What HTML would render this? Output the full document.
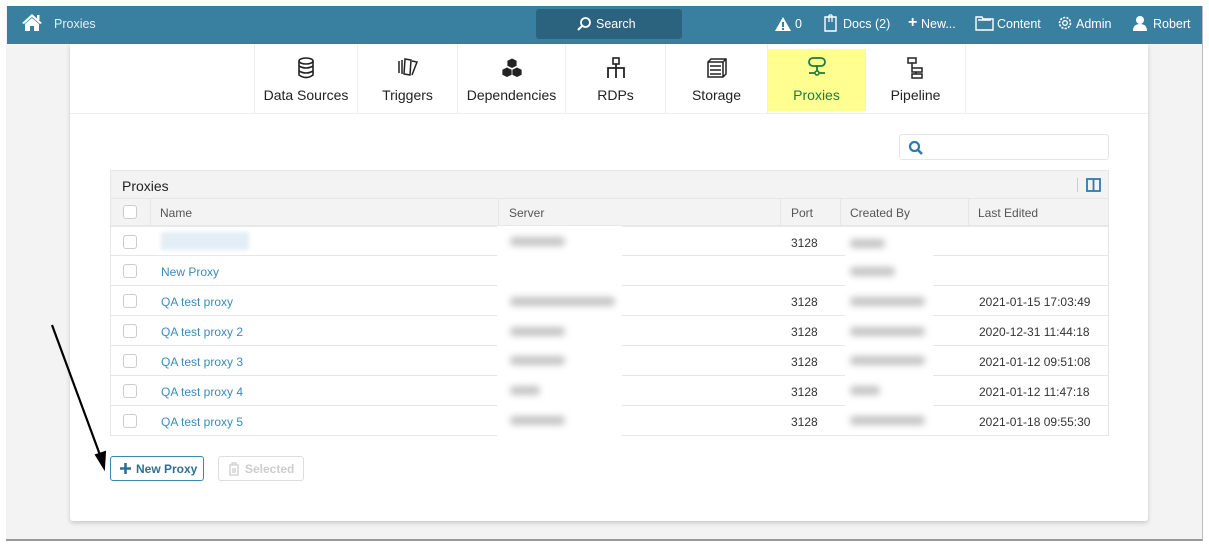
<!DOCTYPE html>
<html><head><meta charset="utf-8"><style>
*{box-sizing:border-box;margin:0;padding:0}
body{width:1209px;height:544px;background:#fff;font-family:"Liberation Sans",sans-serif;position:relative;overflow:hidden;font-size:12px;color:#333}
.frame{position:absolute;left:6px;top:6px;width:1197px;height:535px;background:#f3f3f3;border-right:1px solid #bbb;border-bottom:2px solid #999}
.top{position:absolute;left:7px;top:6px;width:1195px;height:38px;background:#387fa0;color:#fff;font-size:12.5px}
.top span{position:absolute;top:11px}
.search{position:absolute;left:529px;top:3px;width:146px;height:30px;background:#2b627e;border-radius:3px}
.card{position:absolute;left:70px;top:44px;width:1078px;height:477px;background:#fff;box-shadow:0 2px 5px rgba(0,0,0,.18);border-radius:0 0 3px 3px}
.tab{position:absolute;top:44px;height:69px;border-right:1px solid #eee;text-align:center;font-size:14px;color:#222}
.tab .lbl{position:absolute;left:0;right:0;top:43px}
.tab svg{position:absolute;left:50%;top:13px;transform:translateX(-50%)}
.hline{position:absolute;left:70px;width:1078px;top:113px;height:1px;background:#eee}
.abs{position:absolute}
.row{position:absolute;left:110px;width:999px;height:30px;border-bottom:1px solid #e6e6e6;border-left:1px solid #e6e6e6;border-right:1px solid #e6e6e6}
.cb{position:absolute;left:12px;top:8px;width:14px;height:14px;border:1px solid #ccc;border-radius:3px;background:#fff}
.nm{position:absolute;left:50px;top:9px;color:#3a8bbb;font-size:12px}
.pt{position:absolute;left:680px;top:9px}
.le{position:absolute;left:868px;top:9px}
.blur{position:absolute;background:#c4c4c4;filter:blur(3.5px);height:9px;border-radius:4px}
</style></head><body>
<div class="frame"></div>
<div class="top">
 <svg class="abs" style="left:14px;top:7px" width="22" height="19" viewBox="0 0 22 19"><path d="M11 1 L1 10 L3 11 L11 4 L19 11 L21 10 Z" fill="#fff"/><path d="M4 11 L11 5 L18 11 V18 H13 V13 H9 V18 H4Z" fill="#fff"/><rect x="16" y="2" width="2.5" height="5" fill="#fff"/></svg>
 <span style="left:47px;color:#e6eef3">Proxies</span>
 <div class="search"><svg class="abs" style="left:40px;top:7px" width="16" height="16" viewBox="0 0 16 16"><circle cx="9.5" cy="6.5" r="4.5" fill="none" stroke="#fff" stroke-width="1.8"/><path d="M6.3 9.7 L2 14" stroke="#fff" stroke-width="2"/></svg><span style="left:60px;top:8px">Search</span></div>
 <svg class="abs" style="left:768px;top:11px" width="16" height="14" viewBox="0 0 16 14"><path d="M8 0 L16 14 H0Z" fill="#fff"/><rect x="7" y="5" width="2" height="5" fill="#387fa0"/><rect x="7" y="11" width="2" height="2" fill="#387fa0"/></svg>
 <span style="left:788px">0</span>
 <svg class="abs" style="left:817px;top:8px" width="13" height="18" viewBox="0 0 13 18"><path d="M1 3 H12 V17 H1Z" fill="none" stroke="#fff" stroke-width="1.4"/><path d="M5 1 V8 M8 1 V8 M5 1 H8" stroke="#fff" stroke-width="1.2" fill="none"/></svg>
 <span style="left:836px">Docs (2)</span>
 <span style="left:901px;font-weight:bold;font-size:16px;top:8px">+</span><span style="left:914px">New...</span>
 <svg class="abs" style="left:968px;top:10px" width="19" height="15" viewBox="0 0 19 15"><path d="M1 1 H7 L8 3 H18 V14 H1Z M3 4 H16" fill="none" stroke="#fff" stroke-width="1.4"/></svg>
 <span style="left:990px">Content</span>
 <svg class="abs" style="left:1050px;top:9px" width="16" height="16" viewBox="0 0 16 16"><circle cx="8" cy="8" r="5.5" fill="none" stroke="#fff" stroke-width="1.6" stroke-dasharray="2.2 1.2"/><circle cx="8" cy="8" r="2.3" fill="none" stroke="#fff" stroke-width="1.3"/></svg>
 <span style="left:1069px">Admin</span>
 <svg class="abs" style="left:1125px;top:9px" width="16" height="16" viewBox="0 0 16 16"><circle cx="8" cy="5" r="4" fill="#fff"/><path d="M1 16 Q1 9 8 9 Q15 9 15 16Z" fill="#fff"/></svg>
 <span style="left:1146px">Robert</span>
</div>
<div class="card"></div>
<div class="hline"></div>
<div class="tab" style="left:254px;width:104px;border-left:1px solid #eee"><svg width="18" height="22" viewBox="0 0 18 22"><ellipse cx="9" cy="4" rx="7" ry="3" fill="none" stroke="#222" stroke-width="1.6"/><path d="M2 4 V18 Q9 23 16 18 V4 M2 9 Q9 13 16 9 M2 14 Q9 18 16 14" fill="none" stroke="#222" stroke-width="1.6"/></svg><div class="lbl">Data Sources</div></div>
<div class="tab" style="left:358px;width:100px"><svg width="24" height="20" viewBox="0 0 24 20"><path d="M3 4 V16 M6 3 V17" stroke="#222" stroke-width="1.5"/><path d="M9 2 L15 3 L14 18 L8 17Z M16 4 L21 5 L16 18" fill="none" stroke="#222" stroke-width="1.5"/></svg><div class="lbl">Triggers</div></div>
<div class="tab" style="left:458px;width:108px"><svg width="24" height="22" viewBox="0 0 24 22"><path d="M12 1 L17 3.5 V9 L12 11.5 L7 9 V3.5Z M7 10 L12 12.5 V18 L7 20.5 L2 18 V12.5Z M17 10 L22 12.5 V18 L17 20.5 L12 18 V12.5Z" fill="#222" stroke="#fff" stroke-width=".8"/></svg><div class="lbl">Dependencies</div></div>
<div class="tab" style="left:566px;width:100px"><svg width="20" height="22" viewBox="0 0 20 22"><rect x="7" y="1" width="6" height="6" fill="none" stroke="#222" stroke-width="1.6"/><path d="M10 7 V11 M2 21 V11 H18 V21 M10 11 V21" fill="none" stroke="#222" stroke-width="1.8"/></svg><div class="lbl">RDPs</div></div>
<div class="tab" style="left:666px;width:102px"><svg width="22" height="22" viewBox="0 0 22 22"><path d="M2 5 L5 2 H20 V17 L17 20 H2Z M2 5 H17 V20 M17 5 L20 2" fill="none" stroke="#222" stroke-width="1.5"/><path d="M4 9 H15 M4 13 H15 M4 17 H15" stroke="#222" stroke-width="1.5"/></svg><div class="lbl">Storage</div></div>
<div class="tab" style="left:768px;width:98px;background:#fffe8e;top:49px;height:62px;color:#1e7a3e"><svg style="top:8px" width="20" height="20" viewBox="0 0 20 20"><rect x="2" y="1" width="16" height="8" rx="4" fill="none" stroke="#1e7a3e" stroke-width="1.8"/><path d="M10 9 V16 M2 16 H18" stroke="#1e7a3e" stroke-width="1.8"/><circle cx="10" cy="16" r="2" fill="#fffe8e" stroke="#1e7a3e" stroke-width="1.5"/></svg><div class="lbl" style="top:38px">Proxies</div></div>
<div class="tab" style="left:866px;width:100px"><svg width="20" height="22" viewBox="0 0 20 22"><path d="M2 1 H10 V6 H2Z M6 6 V11 M6 11 H16 V15 H6Z M10 15 V17 M6 17 H16 V21 H6Z" fill="none" stroke="#222" stroke-width="1.5"/></svg><div class="lbl">Pipeline</div></div>

<div class="abs" style="left:899px;top:134px;width:210px;height:26px;border:1px solid #e6e6e6;border-radius:3px"><svg class="abs" style="left:8px;top:5px" width="16" height="16" viewBox="0 0 16 16"><circle cx="6.5" cy="6.5" r="4.5" fill="none" stroke="#2e7bad" stroke-width="2.2"/><path d="M10 10 L14 14" stroke="#2e7bad" stroke-width="2.6"/></svg></div>

<div class="abs" style="left:110px;top:170px;width:999px;height:29px;background:#f3f3f3;border:1px solid #e6e6e6"><span class="abs" style="left:11px;top:7px;font-size:14px;color:#222">Proxies</span><div class="abs" style="left:966px;top:7px;width:1px;height:14px;background:#ccc"></div><svg class="abs" style="left:975px;top:7px" width="15" height="14" viewBox="0 0 15 14"><rect x="1" y="1" width="13" height="12" fill="none" stroke="#2e7bad" stroke-width="1.8"/><path d="M7.5 1 V13" stroke="#2e7bad" stroke-width="1.8"/></svg></div>
<div class="abs" style="left:110px;top:199px;width:999px;height:28px;background:#f3f3f3;border:1px solid #e6e6e6;border-top:none;border-bottom:2px solid #e8e8e8;color:#555">
 <div class="cb" style="top:6px"></div>
 <div class="abs" style="left:39px;top:0;height:26px;width:1px;background:#e6e6e6"></div><span class="abs" style="left:49px;top:7px">Name</span>
 <div class="abs" style="left:387px;top:0;height:26px;width:1px;background:#e6e6e6"></div><span class="abs" style="left:398px;top:7px">Server</span>
 <div class="abs" style="left:669px;top:0;height:26px;width:1px;background:#e6e6e6"></div><span class="abs" style="left:680px;top:7px">Port</span>
 <div class="abs" style="left:729px;top:0;height:26px;width:1px;background:#e6e6e6"></div><span class="abs" style="left:739px;top:7px">Created By</span>
 <div class="abs" style="left:857px;top:0;height:26px;width:1px;background:#e6e6e6"></div><span class="abs" style="left:867px;top:7px">Last Edited</span>
</div>

<div class="row" style="top:227px;height:29px"><div class="cb"></div><div class="abs" style="left:50px;top:5px;width:88px;height:18px;background:#e3edf5;filter:blur(2px)"></div><span class="pt">3128</span></div>
<div class="row" style="top:256px"><div class="cb"></div><span class="nm">New Proxy</span></div>
<div class="row" style="top:286px"><div class="cb"></div><span class="nm">QA test proxy</span><span class="pt">3128</span><span class="le">2021-01-15 17:03:49</span></div>
<div class="row" style="top:316px"><div class="cb"></div><span class="nm">QA test proxy 2</span><span class="pt">3128</span><span class="le">2020-12-31 11:44:18</span></div>
<div class="row" style="top:346px"><div class="cb"></div><span class="nm">QA test proxy 3</span><span class="pt">3128</span><span class="le">2021-01-12 09:51:08</span></div>
<div class="row" style="top:376px"><div class="cb"></div><span class="nm">QA test proxy 4</span><span class="pt">3128</span><span class="le">2021-01-12 11:47:18</span></div>
<div class="row" style="top:406px"><div class="cb"></div><span class="nm">QA test proxy 5</span><span class="pt">3128</span><span class="le">2021-01-18 09:55:30</span></div>

<div class="abs" style="left:497px;top:226px;width:125px;height:210px;background:#fff"></div>
<div class="abs" style="left:845px;top:234px;width:88px;height:200px;background:#fff"></div>
<div class="blur" style="left:510px;top:237px;width:55px"></div>
<div class="blur" style="left:510px;top:297px;width:105px"></div>
<div class="blur" style="left:510px;top:327px;width:55px"></div>
<div class="blur" style="left:510px;top:356px;width:55px"></div>
<div class="blur" style="left:510px;top:386px;width:30px"></div>
<div class="blur" style="left:510px;top:416px;width:55px"></div>
<div class="blur" style="left:850px;top:239px;width:35px"></div>
<div class="blur" style="left:850px;top:267px;width:45px"></div>
<div class="blur" style="left:850px;top:297px;width:75px"></div>
<div class="blur" style="left:850px;top:327px;width:75px"></div>
<div class="blur" style="left:850px;top:356px;width:75px"></div>
<div class="blur" style="left:850px;top:386px;width:30px"></div>
<div class="blur" style="left:850px;top:416px;width:75px"></div>

<div class="abs" style="left:110px;top:456px;width:94px;height:25px;border:1px solid #3a87b0;border-radius:3px;color:#2f6f95;font-weight:bold;font-size:12px"><svg class="abs" style="left:9px;top:6px" width="11" height="11" viewBox="0 0 11 11"><path d="M5.5 0 V11 M0 5.5 H11" stroke="#2f6f95" stroke-width="2.6"/></svg><span class="abs" style="left:25px;top:5px">New Proxy</span></div>
<div class="abs" style="left:218px;top:456px;width:86px;height:25px;border:1px solid #ddd;border-radius:3px;color:#ccc;font-weight:bold;font-size:12px"><svg class="abs" style="left:9px;top:5px" width="12" height="14" viewBox="0 0 12 14"><path d="M1 3 H11 M4 3 V1 H8 V3 M2 4 V13 H10 V4 M5 6 V11 M7 6 V11" fill="none" stroke="#ccc" stroke-width="1.3"/></svg><span class="abs" style="left:26px;top:5px">Selected</span></div>

<svg class="abs" style="left:0;top:0" width="1209" height="544"><path d="M52 325 L100 455" stroke="#000" stroke-width="2.2"/><path d="M96 455 L104 468 L105 452Z" fill="#000" stroke="#000" stroke-width="2"/></svg>
</body></html>
